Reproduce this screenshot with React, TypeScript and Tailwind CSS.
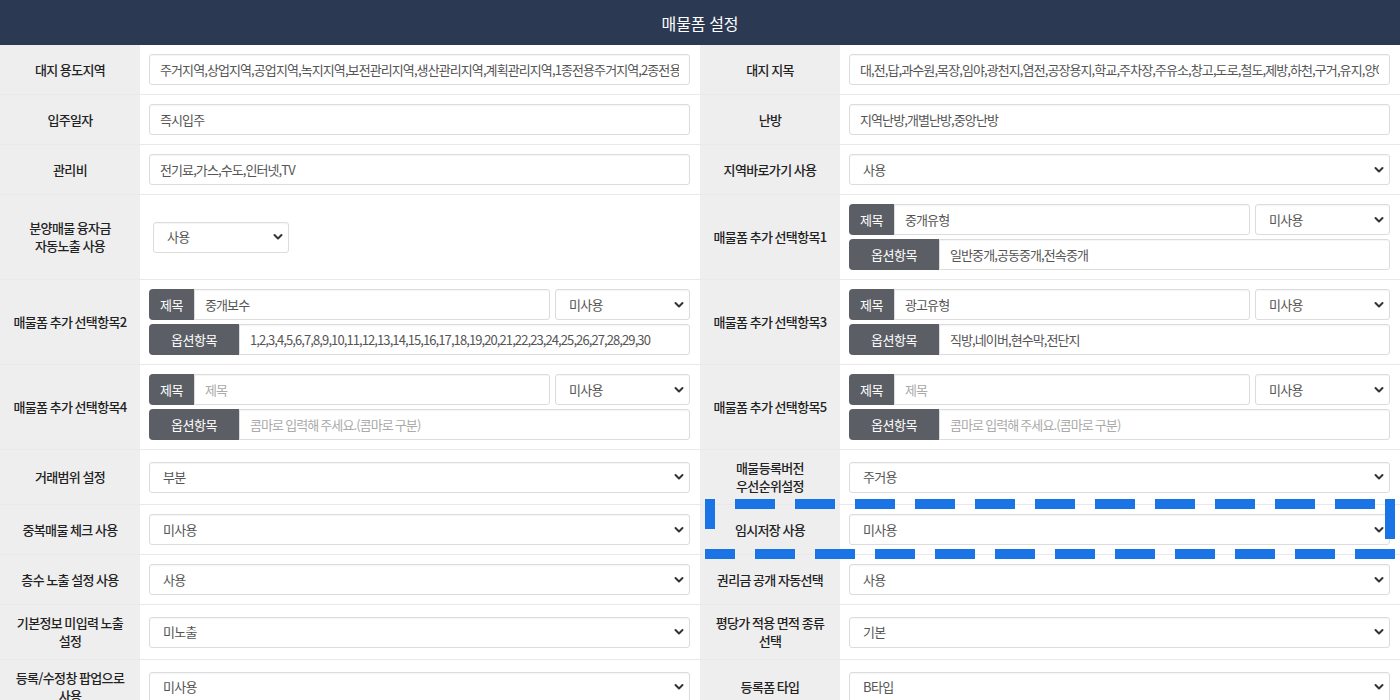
import React from "react";

const font = "font-['Noto_Sans_CJK_KR','Noto_Sans',sans-serif]";

function Label({ children }: { children: React.ReactNode }) {
  return (
    <div className="flex items-center justify-center bg-[#eeeeee] px-2 py-[9px] text-center text-[13px] font-medium leading-[18px] tracking-[-0.05em] text-[#222]">
      <div>{children}</div>
    </div>
  );
}

function Field({ children }: { children: React.ReactNode }) {
  return <div className="flex flex-col justify-center gap-[4px] py-[9px] pl-[9px] pr-[10px]">{children}</div>;
}

function TextInput({ value, placeholder, className = "" }: { value?: string; placeholder?: string; className?: string }) {
  return (
    <input
      readOnly
      defaultValue={value}
      placeholder={placeholder}
      className={`h-[31px] w-full min-w-0 rounded-[3px] border border-[#dcdcdc] bg-white px-[10px] text-[13px] tracking-[-0.07em] text-[#555] shadow-[inset_0_1px_1px_rgba(0,0,0,0.04)] outline-none placeholder:text-[#aaa] ${className}`}
    />
  );
}

function Select({ value, className = "w-full" }: { value: string; className?: string }) {
  return (
    <div className={`relative ${className}`}>
      <select
        defaultValue={value}
        className="h-[31px] w-full appearance-none rounded-[3px] border border-[#dcdcdc] bg-white pl-[13px] pr-6 text-[13px] tracking-[-0.05em] text-[#555] shadow-[inset_0_1px_1px_rgba(0,0,0,0.04)] outline-none"
      >
        <option>{value}</option>
      </select>
      <svg
        className="pointer-events-none absolute right-[6px] top-1/2 -translate-y-1/2"
        width="10"
        height="7"
        viewBox="0 0 10 7"
        fill="none"
      >
        <path d="M1.5 1.5 5 5l3.5-3.5" stroke="#333" strokeWidth="2" strokeLinecap="round" strokeLinejoin="round" />
      </svg>
    </div>
  );
}

function Addon({ children, wide }: { children: React.ReactNode; wide?: boolean }) {
  return (
    <div
      className={`flex h-[31px] shrink-0 items-center justify-center rounded-l-[4px] bg-[#5b5e64] text-[13px] tracking-[-0.04em] text-white ${
        wide ? "w-[90px]" : "w-[45px]"
      }`}
    >
      {children}
    </div>
  );
}

function ExtraField({ title, options }: { title?: string; options?: string }) {
  return (
    <Field>
      <div className="flex gap-[5px]">
        <div className="flex flex-1">
          <Addon>제목</Addon>
          <TextInput value={title} placeholder="제목" className="rounded-l-none" />
        </div>
        <Select value="미사용" className="w-[135px]" />
      </div>
      <div className="flex">
        <Addon wide>옵션항목</Addon>
        <TextInput value={options} placeholder="콤마로 입력해 주세요.(콤마로 구분)" className="rounded-l-none" />
      </div>
    </Field>
  );
}

function Row({ children }: { children: React.ReactNode }) {
  return <div className="grid grid-cols-[140px_560px_140px_560px] border-b-[1px] border-[#e9e9e9]">{children}</div>;
}

export default function App() {
  const topDashes = Array.from({ length: 11 }, (_, k) => 735 + 60 * k);
  const bottomDashes = Array.from({ length: 11 }, (_, k) => 755 + 60 * k);

  return (
    <div className={`relative w-[1400px] bg-white ${font}`}>
      <div className="flex h-[45px] items-center justify-center bg-[#2b3a52] text-[16px] text-white">매물폼 설정</div>

      <Row>
        <Label>대지 용도지역</Label>
        <Field>
          <TextInput value="주거지역,상업지역,공업지역,녹지지역,보전관리지역,생산관리지역,계획관리지역,1종전용주거지역,2종전용주거지역,1종일반주거지역,2종일반주거지역" />
        </Field>
        <Label>대지 지목</Label>
        <Field>
          <TextInput value="대,전,답,과수원,목장,임야,광천지,염전,공장용지,학교,주차장,주유소,창고,도로,철도,제방,하천,구거,유지,양어장,수도용지,공원" />
        </Field>
      </Row>

      <Row>
        <Label>입주일자</Label>
        <Field>
          <TextInput value="즉시입주" />
        </Field>
        <Label>난방</Label>
        <Field>
          <TextInput value="지역난방,개별난방,중앙난방" />
        </Field>
      </Row>

      <Row>
        <Label>관리비</Label>
        <Field>
          <TextInput value="전기료,가스,수도,인터넷,TV" />
        </Field>
        <Label>지역바로가기 사용</Label>
        <Field>
          <Select value="사용" />
        </Field>
      </Row>

      <Row>
        <Label>
          분양매물 융자금
          <br />
          자동노출 사용
        </Label>
        <Field>
          <Select value="사용" className="ml-[4px] w-[136px]" />
        </Field>
        <Label>매물폼 추가 선택항목1</Label>
        <ExtraField title="중개유형" options="일반중개,공동중개,전속중개" />
      </Row>

      <Row>
        <Label>매물폼 추가 선택항목2</Label>
        <ExtraField
          title="중개보수"
          options="1,2,3,4,5,6,7,8,9,10,11,12,13,14,15,16,17,18,19,20,21,22,23,24,25,26,27,28,29,30"
        />
        <Label>매물폼 추가 선택항목3</Label>
        <ExtraField title="광고유형" options="직방,네이버,현수막,전단지" />
      </Row>

      <Row>
        <Label>매물폼 추가 선택항목4</Label>
        <ExtraField />
        <Label>매물폼 추가 선택항목5</Label>
        <ExtraField />
      </Row>

      <Row>
        <Label>거래범위 설정</Label>
        <Field>
          <Select value="부분" />
        </Field>
        <Label>
          매물등록버전
          <br />
          우선순위설정
        </Label>
        <Field>
          <Select value="주거용" />
        </Field>
      </Row>

      <Row>
        <Label>중복매물 체크 사용</Label>
        <Field>
          <Select value="미사용" />
        </Field>
        <Label>임시저장 사용</Label>
        <Field>
          <Select value="미사용" />
        </Field>
      </Row>

      <Row>
        <Label>층수 노출 설정 사용</Label>
        <Field>
          <Select value="사용" />
        </Field>
        <Label>권리금 공개 자동선택</Label>
        <Field>
          <Select value="사용" />
        </Field>
      </Row>

      <Row>
        <Label>
          기본정보 미입력 노출
          <br />
          설정
        </Label>
        <Field>
          <Select value="미노출" />
        </Field>
        <Label>
          평당가 적용 면적 종류
          <br />
          선택
        </Label>
        <Field>
          <Select value="기본" />
        </Field>
      </Row>

      <Row>
        <Label>
          등록/수정창 팝업으로
          <br />
          사용
        </Label>
        <Field>
          <Select value="미사용" />
        </Field>
        <Label>등록폼 타입</Label>
        <Field>
          <Select value="B타입" />
        </Field>
      </Row>

      <svg className="pointer-events-none absolute left-0 top-0" width="1400" height="700">
        <g fill="#1b74e6">
          {topDashes.map((x) => (
            <rect key={`t${x}`} x={x} y={499} width={40} height={10} />
          ))}
          <rect x={1385} y={499} width={10} height={40} />
          <rect x={705} y={549} width={30} height={10} />
          {bottomDashes.map((x) => (
            <rect key={`b${x}`} x={x} y={549} width={40} height={10} />
          ))}
          <rect x={705} y={499} width={10} height={30} />
        </g>
      </svg>
    </div>
  );
}
